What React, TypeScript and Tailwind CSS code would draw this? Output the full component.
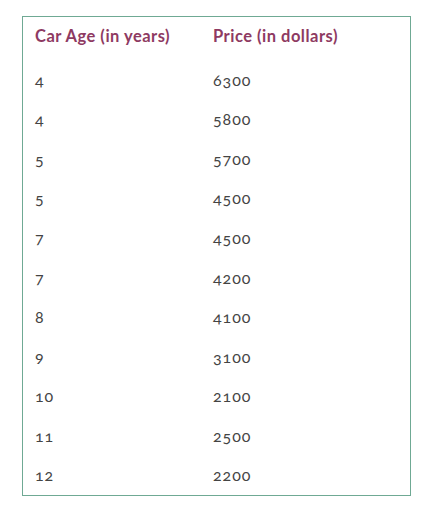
const rows: [number, number][] = [
  [4, 6300],
  [4, 5800],
  [5, 5700],
  [5, 4500],
  [7, 4500],
  [7, 4200],
  [8, 4100],
  [9, 3100],
  [10, 2100],
  [11, 2500],
  [12, 2200],
]

export default function App() {
  return (
    <div className="min-h-[524px] w-[434px] bg-white pl-[22px] pt-[16px] font-['Lato','Open_Sans',sans-serif]">
      <div className="w-[389px] border border-[#6fa994] pl-[12px] pt-[7px]">
        <table className="w-full border-collapse text-left">
          <thead>
            <tr className="h-[24px]">
              <th className="w-[178px] p-0 align-middle text-[16.5px] font-bold tracking-[0.03em] text-[#8e3a62]">Car Age (in years)</th>
              <th className="p-0 align-middle text-[16.5px] font-bold tracking-[0.03em] text-[#8e3a62]">Price (in dollars)</th>
            </tr>
          </thead>
          <tbody>
            <tr className="h-[11px]"><td colSpan={2} className="p-0" /></tr>
            {rows.map(([age, price], i) => (
              <tr key={i} className="h-[39.6px]">
                <td className="p-0 align-middle text-[16px] tracking-[0.06em] text-[#444] oldstyle-nums">{age}</td>
                <td className="p-0 align-middle text-[16px] tracking-[0.06em] text-[#444] oldstyle-nums">{price}</td>
              </tr>
            ))}
          </tbody>
        </table>
      </div>
    </div>
  )
}
